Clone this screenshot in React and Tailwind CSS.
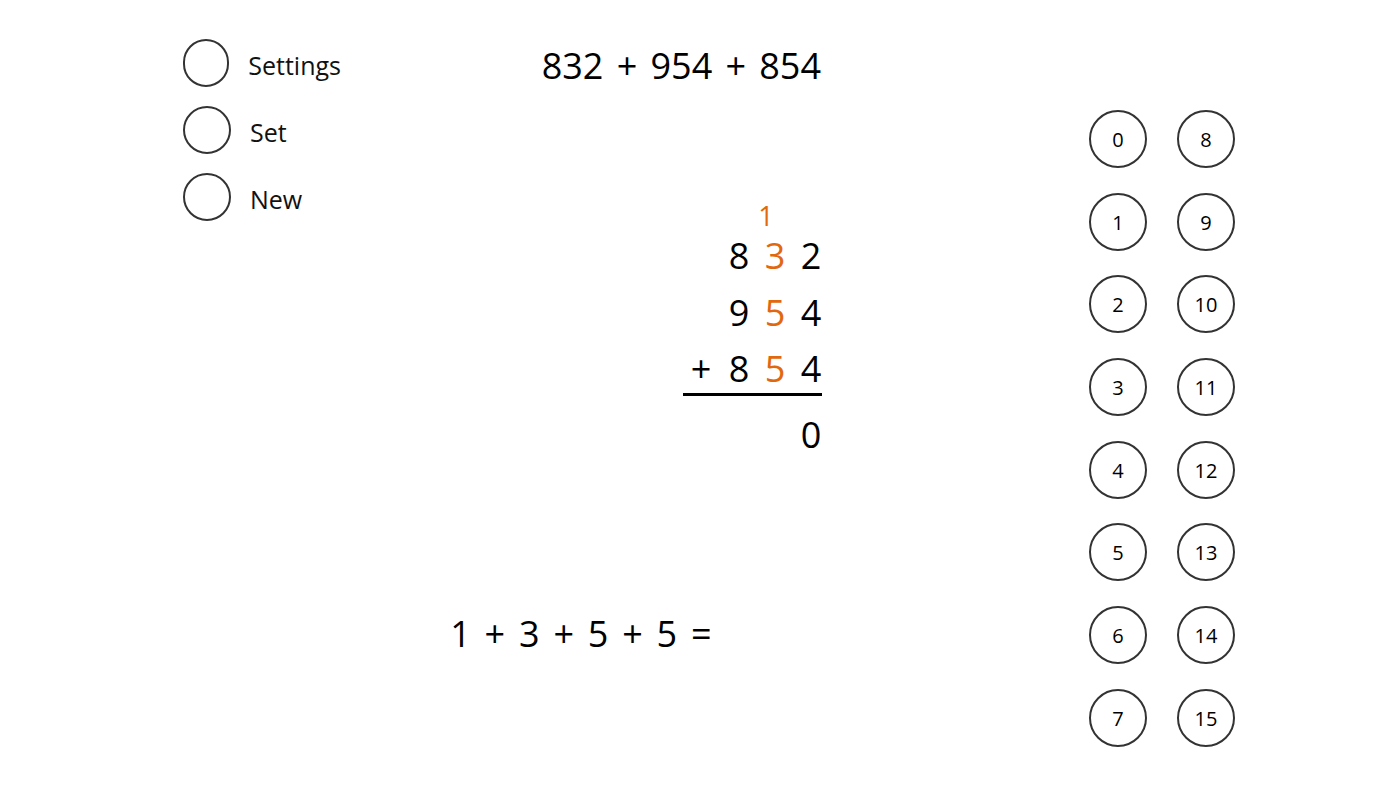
import React from "react";

const font = { fontFamily: '"Open Sans", "Noto Sans", sans-serif' };

function SideItem({ label }) {
  return (
    <div className="flex items-center gap-[19px]">
      <div className="w-[48px] h-[48px] rounded-full border-2 border-[#333333]" />
      <span className="mt-[4px] text-[25px] leading-[30px] text-[#111111]">{label}</span>
    </div>
  );
}

function Cell({ children, orange, extra = "" }) {
  return (
    <div className={"w-[36px] text-center " + extra + " " + (orange ? "text-[#e2680f]" : "text-black")}>
      {children}
    </div>
  );
}

function Expr({ tokens, className, gap }) {
  return (
    <div className={"flex text-[36px] leading-[38px] text-black " + gap + " " + className}>
      {tokens.map((t, i) => (
        <span key={i} className={t.length === 1 ? "w-[21px] text-center" : "text-center"}>
          {t}
        </span>
      ))}
    </div>
  );
}

export default function App() {
  const order = [];
  for (let r = 0; r < 8; r++) {
    order.push(r);
    order.push(r + 8);
  }
  return (
    <div className="w-[1399px] h-[787px] bg-white flex overflow-hidden" style={font}>
      {/* sidebar */}
      <div className="w-[341px] shrink-0 pl-[183px] pt-[39px] flex flex-col gap-[19px]">
        <SideItem label="Settings" />
        <SideItem label="Set" />
        <SideItem label="New" />
      </div>

      {/* main */}
      <div className="w-[481px] shrink-0 flex flex-col items-end pt-[47px]">
        <Expr tokens={["832", "+", "954", "+", "854"]} gap="gap-[13px]" className="mr-[1px]" />

        <div className="mt-[118px] -mr-[7px] flex flex-col items-end text-[36px]">
          <div className="flex h-[25px] text-[27px] leading-[25px]">
            <Cell />
            <Cell />
            <Cell orange extra="pr-[18px]">1</Cell>
            <Cell />
          </div>
          <div className="flex h-[56px] leading-[56px]">
            <Cell />
            <Cell>8</Cell>
            <Cell orange>3</Cell>
            <Cell>2</Cell>
          </div>
          <div className="flex h-[57px] leading-[57px]">
            <Cell />
            <Cell>9</Cell>
            <Cell orange>5</Cell>
            <Cell>4</Cell>
          </div>
          <div className="flex h-[52px] leading-[56px]">
            <Cell extra="pr-[4px]">+</Cell>
            <Cell>8</Cell>
            <Cell orange>5</Cell>
            <Cell>4</Cell>
          </div>
          <div className="w-[139px] h-[3px] bg-black mr-[7px]" />
          <div className="flex h-[56px] mt-[11px] leading-[56px]">
            <Cell>0</Cell>
          </div>
        </div>

        <Expr
          tokens={["1", "+", "3", "+", "5", "+", "5", "="]}
          gap="gap-[13.4px]"
          className="self-start ml-[109px] mt-[152px]"
        />
      </div>

      {/* number pad */}
      <div className="ml-[267px] pt-[110px]">
        <div className="grid grid-cols-[58px_58px] gap-x-[30px] gap-y-[24.7px]">
          {order.map((n) => (
            <div
              key={n}
              className="w-[58px] h-[58px] rounded-full border-2 border-[#333333] flex items-center justify-center pt-[2px] text-[20px] text-black"
            >
              {n}
            </div>
          ))}
        </div>
      </div>
    </div>
  );
}
